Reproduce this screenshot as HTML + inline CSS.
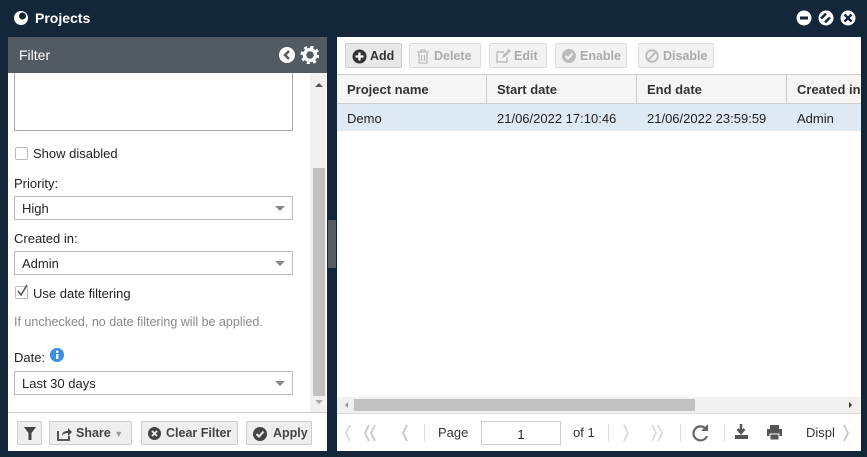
<!DOCTYPE html><html><head><style>
*{box-sizing:border-box}body{margin:0;width:867px;height:457px;background:#13263a;font-family:"Liberation Sans",sans-serif;font-size:13px;color:#222;position:relative;overflow:hidden}
.a{position:absolute}
.sel{position:absolute;left:14px;width:279px;height:24px;border:1px solid #bbb;background:#fff;padding:4px 7px;font-size:13px}
.sel:after{content:"";position:absolute;right:7px;top:9px;border:5px solid transparent;border-top:5px solid #888}
.btn{position:absolute;top:43px;height:25px;border:1px solid #ddd;border-radius:2px;background:#f2f2f2;color:#aaa;font-weight:bold;font-size:12.5px;padding:5px 6px 5px 24px;white-space:nowrap}
.btn svg,.fb svg{position:absolute;left:6px;top:5px}
.fb{position:absolute;top:421px;height:24px;border:1px solid #ccc;border-radius:2px;background:#eee;color:#444;font-weight:bold;font-size:12.5px;padding:4px 6px 4px 24px;white-space:nowrap}
.th{position:absolute;top:74px;height:30px;border-right:1px solid #ccc;padding:8px 10px;font-weight:bold;color:#333;font-size:13px}
.td{position:absolute;top:104px;height:27px;padding:7px 10px;font-size:13px}
.sep{position:absolute;top:424px;width:1px;height:17px;background:#ddd}
</style></head><body>
<svg class="a" style="left:13px;top:10px" width="16" height="16"><circle cx="8" cy="8" r="7" fill="#fff"/><circle cx="9.5" cy="6" r="3.5" fill="#13263a"/></svg>
<div class="a" style="left:35px;top:10px;color:#fff;font-weight:bold;font-size:14px">Projects</div>
<svg class="a" style="left:796px;top:10px" width="64" height="18"><circle cx="8" cy="8" r="7.5" fill="#fff"/><rect x="4" y="6.5" width="8" height="3" fill="#13263a"/><circle cx="30" cy="8" r="7.5" fill="#fff"/><rect x="25.5" y="4.5" width="8" height="7" fill="#13263a" transform="rotate(45 29.5 8)"/><rect x="28" y="2" width="3" height="13" fill="#fff" transform="rotate(45 29.5 8)"/><circle cx="52" cy="8" r="7.5" fill="#fff"/><path d="M48.5 4.5l7 7M55.5 4.5l-7 7" stroke="#13263a" stroke-width="2.4"/></svg>

<div class="a" style="left:8px;top:37px;width:319px;height:414px;background:#fff"></div>
<div class="a" style="left:8px;top:37px;width:319px;height:36px;background:#525a62;color:#fff;font-size:14px;padding:10px 11px">Filter</div>
<svg class="a" style="left:279px;top:46px" width="40" height="18"><circle cx="8" cy="9" r="8" fill="#fff"/><path d="M10 5l-4 4 4 4" stroke="#525a62" stroke-width="2.5" fill="none"/><circle cx="31" cy="9" r="5.5" fill="none" stroke="#fff" stroke-width="3.5"/><circle cx="31" cy="9" r="8" fill="none" stroke="#fff" stroke-width="3" stroke-dasharray="3 3.3"/></svg>
<div class="a" style="left:14px;top:73px;width:279px;height:58px;border:1px solid #aaa;border-top:none"></div>
<div class="a" style="left:310px;top:73px;width:16px;height:340px;background:#f0f0f0"></div>
<div class="a" style="left:313px;top:168px;width:12px;height:228px;background:#c1c1c1"></div>
<div class="a" style="left:315px;top:79px;border:4px solid transparent;border-bottom:4px solid #555"></div>
<div class="a" style="left:315px;top:400px;border:4px solid transparent;border-top:4px solid #aaa"></div>
<div class="a" style="left:15px;top:147px;width:13px;height:13px;border:1px solid #bbb;border-radius:2px"></div>
<div class="a" style="left:33px;top:146px">Show disabled</div>
<div class="a" style="left:14px;top:176px">Priority:</div>
<div class="sel" style="top:196px">High</div>
<div class="a" style="left:14px;top:231px">Created in:</div>
<div class="sel" style="top:251px">Admin</div>
<div class="a" style="left:15px;top:286px;width:13px;height:13px;border:1px solid #bbb;border-radius:2px"></div>
<svg class="a" style="left:15px;top:283px" width="14" height="14"><path d="M3 8l3 4 6-10" stroke="#555" stroke-width="1.6" fill="none"/></svg>
<div class="a" style="left:33px;top:286px">Use date filtering</div>
<div class="a" style="left:14px;top:315px;color:#888;font-size:12.5px">If unchecked, no date filtering will be applied.</div>
<div class="a" style="left:14px;top:350px">Date:</div>
<svg class="a" style="left:50px;top:348px" width="14" height="14"><circle cx="7" cy="7" r="7" fill="#3a8ee6"/><rect x="6" y="6" width="2.4" height="5" fill="#fff"/><circle cx="7.2" cy="3.8" r="1.3" fill="#fff"/></svg>
<div class="sel" style="top:371px">Last 30 days</div>
<div class="a" style="left:8px;top:412px;width:319px;height:1px;background:#ccc"></div>
<div class="fb" style="left:17px;width:25px;padding:0"><svg style="left:6px;top:5px" width="12" height="13"><path d="M0 0h12L7.5 6v7h-3V6z" fill="#444"/></svg></div>
<div class="fb" style="left:49px;width:83px;padding-left:26px"><svg width="16" height="14"><path d="M2 4v9h11V9" stroke="#444" stroke-width="1.8" fill="none"/><path d="M6 9c0-4 3-5 6-5V1l4 4-4 4V6c-3 0-5 1-6 3z" fill="#444"/></svg>Share <span style="color:#999;font-size:9px">▼</span></div>
<div class="fb" style="left:141px;width:97px"><svg width="13" height="13"><circle cx="6.5" cy="6.5" r="6.5" fill="#444"/><path d="M4 4l5 5M9 4l-5 5" stroke="#eee" stroke-width="1.8"/></svg>Clear Filter</div>
<div class="fb" style="left:246px;width:66px;padding-left:26px"><svg width="14" height="14"><circle cx="7" cy="7" r="7" fill="#444"/><path d="M3.5 7l2.5 2.5 4.5-5" stroke="#eee" stroke-width="2" fill="none"/></svg>Apply</div>
<div class="a" style="left:328px;top:220px;width:8px;height:48px;background:#555d66"></div>

<div class="a" style="left:337px;top:37px;width:524px;height:414px;background:#fff"></div>
<div class="btn" style="left:345px;width:57px;color:#333;background:#e8e8e8;border-color:#ccc"><svg width="15" height="15"><circle cx="7.5" cy="7.5" r="7" fill="#333"/><path d="M7.5 3.5v8M3.5 7.5h8" stroke="#fff" stroke-width="2.2"/></svg>Add</div>
<div class="btn" style="left:409px;width:72px"><svg width="14" height="15"><path d="M1 3h12M5 3V1h4v2M3 4v10h8V4M5.5 6v6M8.5 6v6" stroke="#bbb" stroke-width="1.3" fill="none"/></svg>Delete</div>
<div class="btn" style="left:489px;width:58px"><svg width="15" height="14"><path d="M1 3h7M1 3v10h10V8" stroke="#bbb" stroke-width="1.4" fill="none"/><path d="M6 9l1-3 6-6 2 2-6 6z" fill="#bbb"/></svg>Edit</div>
<div class="btn" style="left:555px;width:72px"><svg width="14" height="14"><circle cx="7" cy="7" r="7" fill="#bbb"/><path d="M3.5 7l2.5 2.5 4.5-5" stroke="#f2f2f2" stroke-width="2" fill="none"/></svg>Enable</div>
<div class="btn" style="left:638px;width:76px"><svg width="14" height="14"><circle cx="7" cy="7" r="5.8" stroke="#bbb" stroke-width="2" fill="none"/><path d="M3 11L11 3" stroke="#bbb" stroke-width="2"/></svg>Disable</div>
<div class="a" style="left:337px;top:74px;width:524px;height:30px;background:#f5f5f5;border-top:1px solid #ccc;border-bottom:1px solid #ccc"></div>
<div class="th" style="left:337px;width:150px">Project name</div>
<div class="th" style="left:487px;width:150px">Start date</div>
<div class="th" style="left:637px;width:150px">End date</div>
<div class="th" style="left:787px;width:80px;border:none;white-space:nowrap">Created in</div>
<div class="a" style="left:337px;top:104px;width:524px;height:27px;background:#dde9f5"></div>
<div class="td" style="left:337px">Demo</div>
<div class="td" style="left:487px">21/06/2022 17:10:46</div>
<div class="td" style="left:637px">21/06/2022 23:59:59</div>
<div class="td" style="left:787px">Admin</div>
<div class="a" style="left:337px;top:397px;width:524px;height:16px;background:#f0f0f0"></div>
<div class="a" style="left:354px;top:399px;width:341px;height:12px;background:#c1c1c1"></div>
<div class="a" style="left:342px;top:402px;border:3px solid transparent;border-right:3px solid #999"></div>
<div class="a" style="left:849px;top:402px;border:3px solid transparent;border-left:3px solid #333"></div>
<div class="a" style="left:337px;top:413px;width:524px;height:1px;background:#ddd"></div>
<svg class="a" style="left:340px;top:423px" width="330" height="20"><g fill="none" stroke-width="2"><path d="M10 2l-4 8 4 8" stroke="#ddd"/><path d="M29 2l-4 8 4 8M35 2l-4 8 4 8" stroke="#ccc"/><path d="M67 2l-4 8 4 8" stroke="#ccc"/><path d="M284 2l4 8-4 8" stroke="#ddd"/><path d="M312 2l4 8-4 8M318 2l4 8-4 8" stroke="#ddd"/></g></svg>
<div class="sep" style="left:424px"></div><div class="sep" style="left:608px"></div><div class="sep" style="left:680px"></div><div class="sep" style="left:724px"></div>
<div class="a" style="left:438px;top:425px;color:#333">Page</div>
<div class="a" style="left:481px;top:421px;width:80px;height:24px;border:1px solid #ccc;text-align:center;padding-top:5px">1</div>
<div class="a" style="left:573px;top:425px;color:#333">of 1</div>
<svg class="a" style="left:692px;top:423px" width="18" height="20"><path d="M14 6A7 7 0 1 0 15 13" stroke="#666" stroke-width="2.2" fill="none"/><path d="M16 1v7h-7z" fill="#666"/></svg>
<svg class="a" style="left:734px;top:423px" width="50" height="18"><path d="M7 1v8M3.5 6l3.5 4 3.5-4" stroke="#555" stroke-width="2.5" fill="none"/><rect x="1" y="12" width="13" height="4" fill="#555"/><rect x="36" y="2" width="9" height="4" fill="#555"/><rect x="33" y="6" width="15" height="7" fill="#555"/><rect x="36" y="11" width="9" height="6" fill="#555" stroke="#fff" stroke-width="1"/></svg>
<div class="a" style="left:806px;top:425px;color:#333">Displ</div>
<svg class="a" style="left:840px;top:423px" width="14" height="20"><path d="M4 2l4 8-4 8" stroke="#ccc" stroke-width="2" fill="none"/></svg>
</body></html>
